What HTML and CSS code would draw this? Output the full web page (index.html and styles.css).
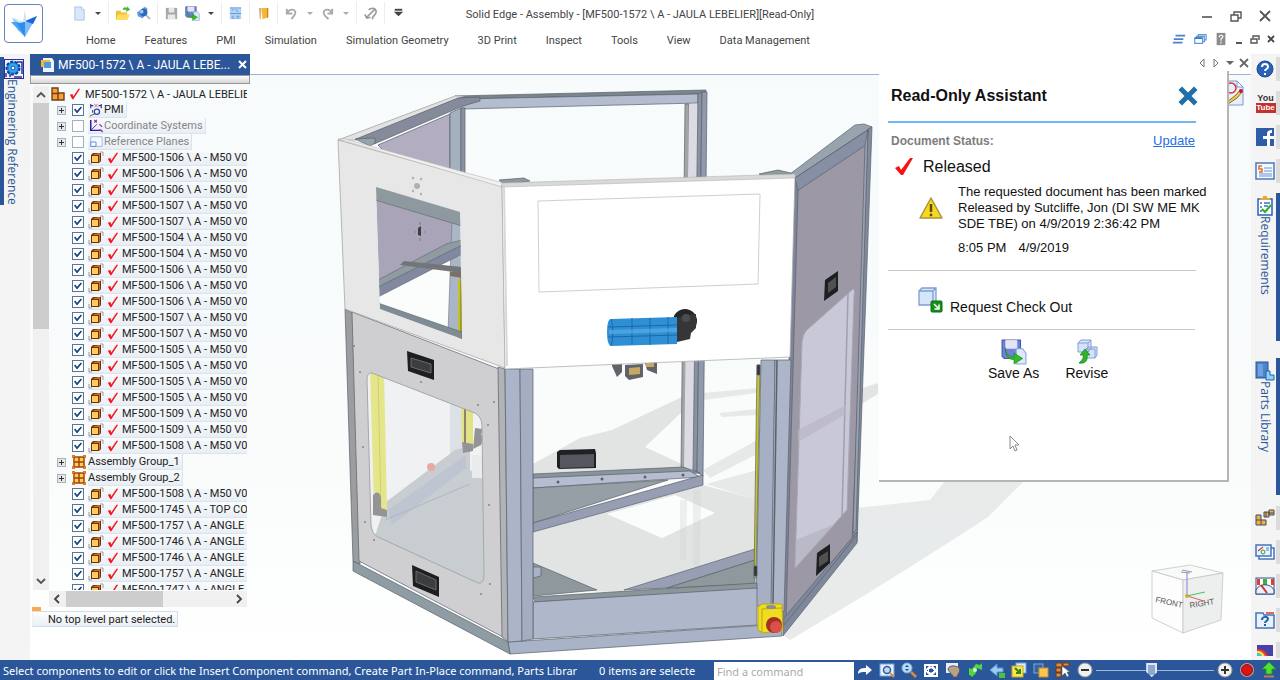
FILE: index.html
```html
<!DOCTYPE html>
<html lang="en">
<head>
<meta charset="utf-8">
<title>Solid Edge - Assembly</title>
<link rel="stylesheet" href="styles.css">
</head>
<body>
<svg class="defs" aria-hidden="true">
  <symbol id="part" viewBox="0 0 16 14"><path d="M1 13V9M1 13h3M15 1v4M15 1h-3" stroke="#9aa0a8" fill="none"/><path d="M3 4l2-2h8v8l-2 2H3z" fill="#6e3210"/><path d="M12 2v8l-1 1V4H5l1-1z" fill="#c8741f"/><rect x="4" y="5" width="6" height="6" fill="#ffcb5c"/></symbol>
  <symbol id="tick" viewBox="0 0 14 14"><path d="M1 8l3-1 1 3 6-9h2L5 13H4z" fill="#f81414"/></symbol>
  <symbol id="root" viewBox="0 0 14 14"><path d="M1 1h6v5h6v7H1z" fill="#f2a43c" stroke="#7a3a12" stroke-width="1.400"/><path d="M1 6.500h7M7 6v7" stroke="#7a3a12" stroke-width="1.400"/></symbol>
  <symbol id="group" viewBox="0 0 14 14"><rect x="2" y="2" width="10" height="10" fill="#ffcf52" stroke="#a3410a" stroke-width="1.500"/><path d="M7 2v10M2 7h10" stroke="#a3410a" stroke-width="1.500"/><path d="M0 0h3v1H1v2H0zM14 0v3h-1V1h-2V0zM0 14v-3h1v2h2v1zM14 14h-3v-1h2v-2h1z" fill="#e87817"/></symbol>
  <symbol id="pmi" viewBox="0 0 16 16"><path d="M2 1v5M14 1v5M2 3h3M11 3h3" stroke="#2b2f9a" stroke-width="1.300" fill="none"/><path d="M6 1l4 4M10 1L6 5" stroke="#e55"/><circle cx="9" cy="10" r="3" fill="none" stroke="#334bb5" stroke-width="1.500"/><path d="M1 15l6-3M4 8v3" stroke="#444"/></symbol>
  <symbol id="coord" viewBox="0 0 16 16"><path d="M2 1v12h13" fill="none" stroke="#2a1f9c" stroke-width="1.700"/><path d="M6 1l3 3M9 1L6 4M12 6l3 3M12 12l4 3" stroke="#9b2aa8" stroke-width="1.300"/><path d="M2 13l7-7" stroke="#2a1f9c"/></symbol>
  <symbol id="plane" viewBox="0 0 16 16"><path d="M2 2h13v11H2z" fill="#f5f9ff" stroke="#93b2e6"/><path d="M2 8h6v5H2z" fill="#fff" stroke="#4f7fd0"/></symbol>
  <symbol id="saveas" viewBox="0 0 24 24"><path d="M1 1h17v17H3l-2-2z" fill="#6f80d8" stroke="#4656ad"/><path d="M4 1h11v8H4z" fill="#e4e6f4"/><path d="M14 9h6l3 4v10h-9z" fill="#dbe9fb" stroke="#8aa6d4"/><path d="M4 8c0 6 3 8 8 9v-4l8 5-8 5v-4C7 19 4 16 4 8z" fill="#35bb24" stroke="#178a15" stroke-width=".6"/></symbol>
</svg>

<div class="app">
  <header class="top">
    <button class="logo" aria-label="Application menu"><svg width="30" height="30" viewBox="0 0 30 30"><path d="M3 9l8 4-1 10z" fill="#8fcdf8"/><path d="M2 13h14v15z" fill="#49a4f2"/><path d="M8 14l8-1v15z" fill="#2f8cea"/><path d="M16 13l12-6-12 21z" fill="#80bdf5"/><path d="M16 12l12-5-4 8z" fill="#1c64dd"/><path d="M3 8l12 5-5 1z" fill="#c9e8fc"/><path d="M16 1l1 11-3 1z" fill="#c9dcf2"/></svg></button>
    <div class="bars">
      <div class="titlebar">
        <div class="quick">
          <div class="grp"><button class="ic" aria-label="New"><svg viewBox="0 0 16 16"><path d="M3 1h7l3 3v11H3z" fill="#d7e8fb" stroke="#a9c4e8"/><path d="M10 1v3h3" fill="#fff" stroke="#a9c4e8"/></svg></button><button class="car" aria-label="New options"></button></div>
          <div class="grp"><button class="ic" aria-label="Open"><svg viewBox="0 0 16 16"><path d="M1 5h5l1 2h6v7H1z" fill="#f3c234"/><path d="M3 9h13l-3 6H1z" fill="#ffdd63"/><path d="M8 4c1-3 3-3 5-2V0l3 4-4 2V4z" fill="#4ab432"/></svg></button><button class="ic" aria-label="View part"><svg viewBox="0 0 16 16"><path d="M10 9l5 5" stroke="#b4b9bf" stroke-width="2"/><path d="M1 7l8-6 3 1v6l-5 5-5-2z" fill="#5f9be0"/><circle cx="8" cy="7" r="4" fill="#2e67b8"/><circle cx="6" cy="6" r="2" fill="#9cc8f4"/></svg></button></div>
          <div class="grp"><button class="ic" aria-label="Save"><svg viewBox="0 0 16 16"><path d="M2 2h12v12H2z" fill="#a7a7a7"/><path d="M5 2h6v5H5zM4 9h8v5H4z" fill="#e8e8e8"/></svg></button><button class="ic" aria-label="Save as"><svg viewBox="0 0 24 24"><use href="#saveas"/></svg></button><button class="car" aria-label="Save options"></button></div>
          <div class="grp"><button class="ic" aria-label="Grid"><svg viewBox="0 0 16 16"><rect x="2" y="2" width="12" height="12" fill="#b4d2f4"/><path d="M2 8h12M2 2h12M4 4h2M8 4l3 2M4 11h2M9 11h3M4 13h3M9 13h3" stroke="#5f97d6"/></svg></button></div>
          <div class="grp"><button class="ic" aria-label="Library"><svg viewBox="0 0 16 16"><path d="M3 2h3l-1 12H4z" fill="#d9b08f"/><path d="M6 2h7v10l-6 2z" fill="#f4b82f"/><path d="M12 2h1v10l-1 1z" fill="#b7761b"/></svg></button></div>
          <div class="grp"><button class="ic" aria-label="Undo"><svg viewBox="0 0 16 16"><path d="M3 3v5h6M3 8c3-6 10-5 9 0-1 3-3 4-4 6" fill="none" stroke="#a9a9a9" stroke-width="2"/></svg></button><button class="car dim" aria-label="Undo list"></button><button class="ic" aria-label="Redo"><svg viewBox="0 0 16 16"><path d="M13 3v5H8M13 8C10 2 3 3 4 8c1 3 3 4 5 6" fill="none" stroke="#a9a9a9" stroke-width="2"/></svg></button><button class="car dim" aria-label="Redo list"></button></div>
          <div class="grp"><button class="ic" aria-label="Selection"><svg viewBox="0 0 16 16"><path d="M2 9l2 4 4-1M4 12L13 3M6 4c4-3 8-1 8 2 0 4-4 4-4 8" fill="none" stroke="#999" stroke-width="1.700"/></svg></button></div>
          <button class="ic" aria-label="Customize"><svg viewBox="0 0 16 16"><path d="M4 3h8v2H4z" fill="#444"/><path d="M3 6h10l-5 5z" fill="#444"/></svg></button>
        </div>
        <h1>Solid Edge - Assembly - [MF500-1572 \ A - JAULA LEBELIER][Read-Only]</h1>
        <div class="winctl">
          <button aria-label="Minimize"><svg viewBox="0 0 14 14"><path d="M2 8h10" stroke="#555" stroke-width="1.600"/></svg></button>
          <button aria-label="Restore"><svg viewBox="0 0 14 14"><path d="M2 6h7v6H2zM5 6V3h7v6H9" fill="none" stroke="#555" stroke-width="1.400"/></svg></button>
          <button aria-label="Close"><svg viewBox="0 0 14 14"><path d="M2 2l10 10M12 2L2 12" stroke="#555" stroke-width="1.800"/></svg></button>
        </div>
      </div>
      <div class="ribbon">
        <nav><a href="#">Home</a><a href="#">Features</a><a href="#">PMI</a><a href="#">Simulation</a><a href="#">Simulation Geometry</a><a href="#">3D Print</a><a href="#">Inspect</a><a href="#">Tools</a><a href="#">View</a><a href="#">Data Management</a></nav>
        <div class="ribctl">
          <button class="wide" aria-label="Ribbon"><svg viewBox="0 0 16 16"><path d="M4 4h11M2 8h11M1 12h11" stroke="#4b83cc" stroke-width="2"/></svg></button>
          <button class="wide" aria-label="Windows"><svg viewBox="0 0 16 16"><path d="M2 7h9v6H2zM4 7V5h9v6h-2M6 5V3h9v6h-2" fill="#fff" stroke="#5c94d8" stroke-width="1.300"/><path d="M2 7h9" stroke="#3b78c8" stroke-width="2"/></svg></button>
          <button class="wide" aria-label="Help"><svg viewBox="0 0 16 16"><path d="M3 1h10v14H3z" fill="#8c8c8c"/><path d="M6 6c0-3 5-3 4 0l-2 2v2M8 11v2" fill="none" stroke="#fff" stroke-width="1.300"/></svg></button>
          <button aria-label="Minimize document"><svg viewBox="0 0 14 14"><path d="M4 11h6" stroke="#444" stroke-width="1.800"/></svg></button>
          <button aria-label="Restore document"><svg viewBox="0 0 14 14"><path d="M3 7h6v4H3zM5 6V4h6v4" fill="none" stroke="#555" stroke-width="1.400"/></svg></button>
          <button aria-label="Close document"><svg viewBox="0 0 14 14"><path d="M4 4l6 6M10 4l-6 6" stroke="#444" stroke-width="1.800"/></svg></button>
        </div>
      </div>
    </div>
  </header>

  <main class="work">
    <aside class="rail left">
      <button class="tab tall eng"><svg width="20" height="20" viewBox="0 0 20 20"><rect x=".5" y=".5" width="19" height="19" fill="#eef4ff" stroke="#2b2f9a"/><path d="M13 3h5v12M2 18V14M6 18v-3M10 18h8" fill="none" stroke="#2b2f9a" stroke-width="1.500"/><circle cx="9" cy="9" r="6.500" fill="#1e8fe0" stroke="#123c9c" stroke-width="2" stroke-dasharray="3 1.500"/><circle cx="9" cy="9" r="4" fill="#35b0f5"/><circle cx="9" cy="9" r="2" fill="#fff" stroke="#123c9c"/></svg><span>Engineering Reference</span></button>
    </aside>

    <section class="finder" aria-label="PathFinder">
      <div class="ftitle"><svg width="14" height="14" viewBox="0 0 14 14"><path d="M2 0h9l2 3v11H2z" fill="#eef4fb"/><path d="M0 2h9v7H0z" fill="#f0b93a"/><path d="M3 4h7v6H3z" fill="#4d9be0"/></svg><h2>MF500-1572 \ A - JAULA LEBE...</h2><button aria-label="Close"><svg width="9" height="9" viewBox="0 0 9 9"><path d="M1 1l7 7M8 1L1 8" stroke="#fff" stroke-width="2"/></svg></button></div>
      <div class="grip"></div>
      <div class="treebox">
        <div class="vscroll"><svg width="10" height="8" viewBox="0 0 10 8"><path d="M1 6l4-4 4 4" fill="none" stroke="#555" stroke-width="1.800"/></svg><div class="track"><div class="thumb"></div></div><svg width="10" height="8" viewBox="0 0 10 8"><path d="M1 2l4 4 4-4" fill="none" stroke="#555" stroke-width="1.800"/></svg></div>
        <ul class="tree">
          <li class="root"><svg class="g"><use href="#root"/></svg><svg class="t"><use href="#tick"/></svg><span>MF500-1572 \ A - JAULA LEBELIER</span></li>
          <li class="sys"><button class="plus" aria-label="Expand"></button><label><input type="checkbox" checked><span class="hl"><svg class="p"><use href="#pmi"/></svg><span>PMI</span></span></label></li>
          <li class="sys off"><button class="plus" aria-label="Expand"></button><label><input type="checkbox"><span class="hl"><svg class="p"><use href="#coord"/></svg><span>Coordinate Systems</span></span></label></li>
          <li class="sys off"><button class="plus" aria-label="Expand"></button><label><input type="checkbox"><span class="hl"><svg class="p"><use href="#plane"/></svg><span>Reference Planes</span></span></label></li>
          <li><label><input type="checkbox" checked><span class="hl"><svg class="p"><use href="#part"/></svg><svg class="t"><use href="#tick"/></svg><span>MF500-1506 \ A - M50 V0</span></span></label></li>
          <li><label><input type="checkbox" checked><span class="hl"><svg class="p"><use href="#part"/></svg><svg class="t"><use href="#tick"/></svg><span>MF500-1506 \ A - M50 V0</span></span></label></li>
          <li><label><input type="checkbox" checked><span class="hl"><svg class="p"><use href="#part"/></svg><svg class="t"><use href="#tick"/></svg><span>MF500-1506 \ A - M50 V0</span></span></label></li>
          <li><label><input type="checkbox" checked><span class="hl"><svg class="p"><use href="#part"/></svg><svg class="t"><use href="#tick"/></svg><span>MF500-1507 \ A - M50 V0</span></span></label></li>
          <li><label><input type="checkbox" checked><span class="hl"><svg class="p"><use href="#part"/></svg><svg class="t"><use href="#tick"/></svg><span>MF500-1507 \ A - M50 V0</span></span></label></li>
          <li><label><input type="checkbox" checked><span class="hl"><svg class="p"><use href="#part"/></svg><svg class="t"><use href="#tick"/></svg><span>MF500-1504 \ A - M50 V0</span></span></label></li>
          <li><label><input type="checkbox" checked><span class="hl"><svg class="p"><use href="#part"/></svg><svg class="t"><use href="#tick"/></svg><span>MF500-1504 \ A - M50 V0</span></span></label></li>
          <li><label><input type="checkbox" checked><span class="hl"><svg class="p"><use href="#part"/></svg><svg class="t"><use href="#tick"/></svg><span>MF500-1506 \ A - M50 V0</span></span></label></li>
          <li><label><input type="checkbox" checked><span class="hl"><svg class="p"><use href="#part"/></svg><svg class="t"><use href="#tick"/></svg><span>MF500-1506 \ A - M50 V0</span></span></label></li>
          <li><label><input type="checkbox" checked><span class="hl"><svg class="p"><use href="#part"/></svg><svg class="t"><use href="#tick"/></svg><span>MF500-1506 \ A - M50 V0</span></span></label></li>
          <li><label><input type="checkbox" checked><span class="hl"><svg class="p"><use href="#part"/></svg><svg class="t"><use href="#tick"/></svg><span>MF500-1507 \ A - M50 V0</span></span></label></li>
          <li><label><input type="checkbox" checked><span class="hl"><svg class="p"><use href="#part"/></svg><svg class="t"><use href="#tick"/></svg><span>MF500-1507 \ A - M50 V0</span></span></label></li>
          <li><label><input type="checkbox" checked><span class="hl"><svg class="p"><use href="#part"/></svg><svg class="t"><use href="#tick"/></svg><span>MF500-1505 \ A - M50 V0</span></span></label></li>
          <li><label><input type="checkbox" checked><span class="hl"><svg class="p"><use href="#part"/></svg><svg class="t"><use href="#tick"/></svg><span>MF500-1505 \ A - M50 V0</span></span></label></li>
          <li><label><input type="checkbox" checked><span class="hl"><svg class="p"><use href="#part"/></svg><svg class="t"><use href="#tick"/></svg><span>MF500-1505 \ A - M50 V0</span></span></label></li>
          <li><label><input type="checkbox" checked><span class="hl"><svg class="p"><use href="#part"/></svg><svg class="t"><use href="#tick"/></svg><span>MF500-1505 \ A - M50 V0</span></span></label></li>
          <li><label><input type="checkbox" checked><span class="hl"><svg class="p"><use href="#part"/></svg><svg class="t"><use href="#tick"/></svg><span>MF500-1509 \ A - M50 V0</span></span></label></li>
          <li><label><input type="checkbox" checked><span class="hl"><svg class="p"><use href="#part"/></svg><svg class="t"><use href="#tick"/></svg><span>MF500-1509 \ A - M50 V0</span></span></label></li>
          <li><label><input type="checkbox" checked><span class="hl"><svg class="p"><use href="#part"/></svg><svg class="t"><use href="#tick"/></svg><span>MF500-1508 \ A - M50 V0</span></span></label></li>
          <li class="sys"><button class="plus" aria-label="Expand"></button><svg class="g"><use href="#group"/></svg><span class="hl fit">Assembly Group_1</span></li>
          <li class="sys"><button class="plus" aria-label="Expand"></button><svg class="g"><use href="#group"/></svg><span class="hl fit">Assembly Group_2</span></li>
          <li><label><input type="checkbox" checked><span class="hl"><svg class="p"><use href="#part"/></svg><svg class="t"><use href="#tick"/></svg><span>MF500-1508 \ A - M50 V0</span></span></label></li>
          <li><label><input type="checkbox" checked><span class="hl"><svg class="p"><use href="#part"/></svg><svg class="t"><use href="#tick"/></svg><span>MF500-1745 \ A - TOP COV</span></span></label></li>
          <li><label><input type="checkbox" checked><span class="hl"><svg class="p"><use href="#part"/></svg><svg class="t"><use href="#tick"/></svg><span>MF500-1757 \ A - ANGLE C</span></span></label></li>
          <li><label><input type="checkbox" checked><span class="hl"><svg class="p"><use href="#part"/></svg><svg class="t"><use href="#tick"/></svg><span>MF500-1746 \ A - ANGLE C</span></span></label></li>
          <li><label><input type="checkbox" checked><span class="hl"><svg class="p"><use href="#part"/></svg><svg class="t"><use href="#tick"/></svg><span>MF500-1746 \ A - ANGLE C</span></span></label></li>
          <li><label><input type="checkbox" checked><span class="hl"><svg class="p"><use href="#part"/></svg><svg class="t"><use href="#tick"/></svg><span>MF500-1757 \ A - ANGLE C</span></span></label></li>
          <li><label><input type="checkbox" checked><span class="hl"><svg class="p"><use href="#part"/></svg><svg class="t"><use href="#tick"/></svg><span>MF500-1747 \ A - ANGLE C</span></span></label></li>
        </ul>
      </div>
      <div class="hscroll"><svg width="8" height="10" viewBox="0 0 8 10"><path d="M6 1L2 5l4 4" fill="none" stroke="#444" stroke-width="1.800"/></svg><div class="htrack"><div class="hthumb"></div></div><svg width="8" height="10" viewBox="0 0 8 10"><path d="M2 1l4 4-4 4" fill="none" stroke="#444" stroke-width="1.800"/></svg></div>
      <div class="mark"></div>
      <div class="msg">No top level part selected.</div>
    </section>

    <section class="view">
      <div class="strip">
        <button aria-label="Previous"><svg viewBox="0 0 12 12"><path d="M8 2v8L4 6z" fill="none" stroke="#777"/></svg></button><button aria-label="Next"><svg viewBox="0 0 12 12"><path d="M4 2v8l4-4z" fill="none" stroke="#777"/></svg></button><button aria-label="List"><svg viewBox="0 0 12 12"><path d="M2 4h8L6 8z" fill="#666"/></svg></button><button aria-label="Close view"><svg viewBox="0 0 12 12"><path d="M2 2l8 8M10 2l-8 8" stroke="#666" stroke-width="1.800"/></svg></button>
      </div>
      <div class="canvas">
<svg class="scene" viewBox="250 75 1001 585" preserveAspectRatio="xMinYMin meet" role="img" aria-label="Machine enclosure assembly">
  <!-- floor shadows -->
  <g fill="#e2e4e4">
    <path d="M533 464L580 438 612 430 684 396V410L645 447 684 465V473L533 480z"/>
    <path d="M703 393L757 388V393L703 400zM719 413L757 409V415L722 417zM703 470L757 440V454L710 478zM706 484L757 500V470z" opacity=".8"/>
    <path d="M862 388L878 383V394L858 406z"/>
    <path d="M857 508L930 500 945 481H1024L988 517 940 548 870 592 790 640 784 636 857 543z" opacity=".75"/>
    <path d="M533 532L703 485 755 499V550L620 592 533 590z"/>
  </g>
  <path d="M607 514L675 495 715 513 662 538z" fill="#fbfdfc"/>
  <path d="M680 500h7l-1 60h-6zM693 490h8l-1 76h-7z" fill="#cfd3d6" opacity=".35"/>
  <g stroke="#59616b" stroke-width=".7" stroke-linejoin="round">
    <!-- rear frame -->
    <path d="M455 96L706 90 706 94 462 99z" fill="#7b868c"/>
    <path d="M462 99L698 94V103L462 109z" fill="#b4bccf"/>
    <path d="M685 104H689L686 468H681z" fill="#a3a5a5"/>
    <path d="M689 104H698L693 470H684z" fill="#dcdae4" stroke="none"/>
    <path d="M698 94L702 92 697 472 693 470z" fill="#8993a0"/>
    <path d="M702 92H707L703 476 697 472z" fill="#9199af"/>
    <path d="M378 145L450 114V170L385 152z" fill="#b3adc1"/>
    <path d="M450 113L461 108V174L450 170z" fill="#a4b0bd"/>
    <path d="M461 108H465V174H461z" fill="#8b91a3"/>
    <path d="M338 140L455 96 464 96 356 140z" fill="#e2e2e2" stroke="#999"/>
    <path d="M356 139L458 98 480 97 480 101 463 106 374 144z" fill="#858b9a"/>
    <path d="M355 139L375 138V143L370 146z" fill="#96a4aa"/>
    <path d="M499 180L524 178 530 181 505 185zM759 174L778 170 795 174 770 178z" fill="#8f9a9f"/>
    <!-- rear floor beams -->
    <path d="M533 474L683 467 700 473 533 481z" fill="#89949a"/>
    <path d="M533 478L690 471 700 477 533 488z" fill="#b6bdd0"/>
    <path d="M533 488L668 480 533 523z" fill="#969fa5"/>
    <path d="M533 523L703 475V485L533 532z" fill="#979eb4"/>
    <path d="M624 590L755 549V560L667 588z" fill="#999fb3"/>
    <path d="M667 588L755 560V584z" fill="#8f999d"/>
    <path d="M533 563L597 590 533 596z" fill="#8f999d"/>
    <path d="M533 567L541 567 541 576 533 578z" fill="#aab2c4"/>
  </g>
  <g fill="#59616b"><circle cx="558" cy="482" r="1.500"/><circle cx="602" cy="479" r="1.500"/><circle cx="645" cy="477" r="1.500"/><circle cx="683" cy="475" r="1.500"/></g>
  <!-- rear latch box -->
  <path d="M557 452L560 450 595 449 596 453V468L559 469 557 467z" fill="#1f2022"/><path d="M560 455L594 454V467L560 468z" fill="#55565f"/>
  <!-- hanging brackets -->
  <path d="M612 362L622 363V372L617 377 612 366zM625 365L643 364V377L629 380 625 376zM645 363L657 362V374L647 370z" fill="#626368"/><path d="M629 368L640 367V374L629 375zM646 363h8v4h-8z" fill="#c7a765"/>
  <g stroke="#59616b" stroke-width=".7" stroke-linejoin="round">
    <!-- right wall -->
    <path d="M795 178L867 129 857 534 783 630z" fill="#9c98a5"/>
    <path d="M790 174L855 125 864 124 872 127 795 178z" fill="#98a4ad"/>
    <path d="M795 178L868 130 866 145 797 191z" fill="#878fa4"/>
    <path d="M868 129L872 127 857 542 852 545 864 240z" fill="#838a9b"/>
    <path d="M865 145L868 130 856 530 853 533z" fill="#98a2b3"/>
    <path d="M795 178L798 191 786 620 782 628 789 360z" fill="#7f8499"/>
    <path d="M857 532V543L783 636 784 618z" fill="#7f889a"/>
    <path d="M857 535L784 625" fill="none"/>
  </g>
  <path d="M808 329L853 289Q855 289 854 296L847 510 795 568 802 342Q803 333 808 329z" fill="#c8c8d6" stroke="#a9a7b5"/>
  <path d="M848 293L842 516" stroke="#a09fb0" stroke-width="1.500"/><path d="M798 430L846 405V414L798 442z" fill="#b9b7c5" opacity=".7"/>
  <path d="M796 540L835 524 795 568z" fill="#b3b2c0" opacity=".7"/>
  <path d="M825 280L838 271V291L824 301zM817 553L830 544V563L816 576z" fill="#1e1f20"/><path d="M828 283L836 277V287L828 293zM819 557L828 551V561L819 567z" fill="#4f5152"/>
  <g stroke="#59616b" stroke-width=".7" stroke-linejoin="round">
    <!-- front right posts -->
    <path d="M761 360H775L772 606H756z" fill="#a6afc3"/><path d="M775 360H791L784 612 771 606z" fill="#adb5c8"/><path d="M777 360L773 604" fill="none" stroke-width="1.500"/>
    <path d="M757 365H760L756 578H754z" fill="#c8c81c"/><path d="M757 365h3v10h-3zM754 566h3v10h-3z" fill="#333"/>
    <!-- front sill -->
    <path d="M533 597L757 583V589L535 602z" fill="#8b969b"/>
    <path d="M533 602L757 588V625L533 639z" fill="#afb7ca"/>
    <path d="M508 642L782 624V636L510 654z" fill="#a9b3c7"/>
    <path d="M353 561L508 642 510 654 353 571z" fill="#8f9ca4"/>
    <!-- lower left door -->
    <path d="M345 309L353 313 360 564 353 561z" fill="#9b9da0"/>
    <path d="M352 312L499 369 503 637 359 561z" fill="#cfcfd1"/>
    <path d="M498 367L505 369 508 642 502 637z" fill="#b2b3b5"/>
    <path d="M505 369H520L522 641 508 642z" fill="#abb4c8"/><path d="M520 369H533V639L522 641z" fill="#a4adc2"/>
  </g>
  <clipPath id="pane"><path d="M372 373L475 413Q482 417 482 426L484 575Q484 584 478 583L378 537Q372 534 371 525L367 380Q367 372 372 373z"/></clipPath>
  <g clip-path="url(#pane)">
    <path d="M365 370h121v216H365z" fill="#eff1f2"/>
    <path d="M450 400h14v80h-14z" fill="#dce1e7"/>
    <path d="M386 502L455 450 470 446 470 470 484 480V590L375 536z" fill="#c8cdd2"/>
    <path d="M388 510L466 455V468L392 525z" fill="#bfc4d1"/><path d="M385 520L470 484" stroke="#afb6bf"/>
    <path d="M472 455h14v23h-14z" fill="#e9ebec"/>
    <circle cx="431" cy="467" r="4" fill="#e8a9a2"/>
    <path d="M370 370H384L387 512 374 508z" fill="#e5e68c"/><path d="M378 373L381 510" stroke="#cfcf6d"/>
    <path d="M461 405h12v40h-11z" fill="#e1e283"/><path d="M465 405v40" stroke="#8d8170" stroke-width="2"/>
    <path d="M373 495q6-6 8 3v10l6 2v7l-14-2z" fill="#949396"/><path d="M462 442l11 2v7l-10 2zM475 428l8 1-2 6 3 2-3 8-8 4 1-10z" fill="#949396"/>
  </g>
  <path d="M372 373L475 413Q482 417 482 426L484 575Q484 584 478 583L378 537Q372 534 371 525L367 380Q367 372 372 373z" fill="none" stroke="#a6a6a8"/>
  <g fill="#85868a"><circle cx="360" cy="372" r="1"/><circle cx="354" cy="346" r="1"/><circle cx="363" cy="447" r="1"/><circle cx="365" cy="522" r="1"/><circle cx="374" cy="540" r="1"/><circle cx="478" cy="405" r="1"/><circle cx="494" cy="402" r="1"/><circle cx="488" cy="425" r="1"/><circle cx="489" cy="505" r="1"/><circle cx="490" cy="584" r="1"/><circle cx="481" cy="594" r="1"/><circle cx="421" cy="382" r="1"/></g>
  <g fill="#1d1e1f"><path d="M407 351L434 360V380L408 371zM412 565L439 577V597L413 586z"/></g>
  <path d="M411 358L431 364V373L411 367zM416 571L436 580V590L416 582z" fill="#3c3d3f" stroke="#686a6c"/>
  <!-- upper panels -->
  <path d="M338 140L502 186 505 368 345 309z" fill="#e7e7e8" stroke="#a7a7a7" stroke-width=".8"/>
  <path d="M338 139L345 139 503 183 502 187z" fill="#f1f0ef" stroke="#b5b5b5" stroke-width=".6"/>
  <path d="M502 185L795 177 790 357 505 369z" fill="#fff" stroke="#b0b0b0" stroke-width=".8"/>
  <path d="M502 183L795 174V178L502 187z" fill="#d9d9d8" stroke="#aaa" stroke-width=".5"/>
  <path d="M504 187L507 366" stroke="#d8d8d8" stroke-width="2"/>
  <path d="M538 201L760 194 758 284 539 292z" fill="none" stroke="#cfcfcf"/>
  <g fill="#aeb0b5"><circle cx="417" cy="186" r="3"/><circle cx="413" cy="178" r="1.200"/><circle cx="421" cy="179" r="1.200"/><circle cx="413" cy="191" r="1.200"/><circle cx="421" cy="194" r="1.200"/></g>
  <clipPath id="port"><path d="M376 187L460 212 462 339 380 309z"/></clipPath>
  <g clip-path="url(#port)">
    <path d="M370 180h100v170H370z" fill="#fafdfc"/>
    <path d="M376 199L452 222V245L379 285z" fill="#aaa4b8"/>
    <path d="M452 222h10v110H448z" fill="#aab6c6" stroke="#6c7684" stroke-width=".6"/>
    <path d="M375 186L462 212V226L375 200z" fill="#8e999f" stroke="#5c6670" stroke-width=".6"/>
    <path d="M378 280L446 244 462 240V246L378 288z" fill="#8f9ba0" stroke="#5c6670" stroke-width=".6"/>
    <path d="M378 287L462 245V254L378 297z" fill="#8188a0" stroke="#5c6670" stroke-width=".6"/>
    <path d="M400 265L404 261 462 267V273z" fill="#747579"/><path d="M450 272h12v6l-12-2z" fill="#7a7164"/>
    <path d="M458 280h4v60h-4z" fill="#c3c222"/><path d="M461 275v62" stroke="#70723c"/>
    <path d="M378 303L462 332V341L378 310z" fill="#808c94" stroke="#5c6670" stroke-width=".6"/>
    <path d="M418 228l3-2v10l-3-1z" fill="#3d3d42"/><path d="M420 222v3M420 238v3M415 232h1M424 232h1" stroke="#777"/>
  </g>
  <!-- motor -->
  <circle cx="685" cy="321" r="12" fill="#252628"/><path d="M686 315l10-1v14l-5 5-1 6-13 3v-24z" fill="#353638"/><circle cx="686" cy="318" r="4" fill="#4b4c50"/>
  <path d="M611 319L677 317V344L611 346Q607 345 607 332T611 319z" fill="#2f8fd5"/><path d="M611 319Q615 332 611 346M632 318v27M650 318v27M668 317v27M608 327L677 325M608 337L677 335" fill="none" stroke="#1b68a8"/><path d="M609 330L677 328V332L609 334z" fill="#62b1ea" opacity=".6"/>
  <!-- emergency stop -->
  <path d="M758 607L762 604 782 604 783 630 763 633 758 630z" fill="#f0dc20" stroke="#bba810"/><path d="M762 609L782 608M762 609V632" stroke="#bba810"/><ellipse cx="771" cy="607" rx="5" ry="2" fill="#8b8d92"/><circle cx="774" cy="625" r="8" fill="#a52e27"/><circle cx="776" cy="627" r="6" fill="#d95049"/>
  <!-- view cube -->
  <g stroke="#c4c7c7" stroke-width=".8"><path d="M1152 571L1190 565 1223 573 1183 580z" fill="#f8f9f9"/><path d="M1152 571L1183 580V633L1152 618z" fill="#fdfdfd"/><path d="M1183 580L1223 573 1221 620 1183 633z" fill="#edeeee"/></g>
  <g class="cubetext"><text x="1155" y="602" transform="rotate(12 1155 602)">FRONT</text><text x="1190" y="608" transform="rotate(-9 1190 608)">RIGHT</text><path d="M1182 570l10 2M1181 572l9 1" stroke="#999"/></g>
  <path d="M1187 596V573" stroke="#8080e0"/><path d="M1187 596L1205 592" stroke="#40c860"/><path d="M1187 596L1204 601" stroke="#e06060"/><circle cx="1187" cy="596" r="2" fill="#c9b02a"/>
</svg>
      </div>
      <button class="sketch" aria-label="Markup"><svg width="20" height="26" viewBox="0 0 20 26"><path d="M1 1h12l6 6v18H1z" fill="#e7effb" stroke="#7f98cc"/><path d="M13 1v6h6z" fill="#fff" stroke="#7f98cc"/><circle cx="7" cy="8" r="5" fill="none" stroke="#d8333a" stroke-width="1.500"/><path d="M3 22l9-7 4-5 2 2-5 6-9 6z" fill="#f2cf52" stroke="#8d6a24"/><circle cx="17" cy="11" r="2" fill="#c4123f"/></svg></button>

      <aside class="assist" aria-label="Read-Only Assistant">
        <div class="ahead"><h2>Read-Only Assistant</h2><button aria-label="Close assistant"><svg width="20" height="20" viewBox="0 0 20 20"><path d="M4 4l12 12M16 4L4 16" stroke="#1f6fa8" stroke-width="5" stroke-linecap="square"/></svg></button></div>
        <div class="arow"><h3>Document Status:</h3><a href="#">Update</a></div>
        <div class="rel"><svg width="18" height="18" viewBox="0 0 18 18"><path d="M0 10l4-2 2 4 9-12h3L8 17H6z" fill="#fa1010"/></svg><strong>Released</strong></div>
        <div class="note"><svg width="26" height="22" viewBox="0 0 26 22"><path d="M13 1l11 20H2z" fill="#f8d81c" stroke="#a89440" stroke-width="1.500" stroke-linejoin="round"/><path d="M13 7v8" stroke="#574d12" stroke-width="2.500"/><circle cx="13" cy="18" r="1.400" fill="#574d12"/></svg>
          <div><p>The requested document has been marked<br>Released by Sutcliffe, Jon (DI SW ME MK<br>SDE TBE) on 4/9/2019 2:36:42 PM</p><p class="time"><span>8:05 PM</span><span>4/9/2019</span></p></div></div>
        <button class="checkout"><svg width="26" height="26" viewBox="0 0 26 26"><path d="M1 4h14v14H1zM1 4l3-3h14v13l-3 4M15 4l3-3" fill="#d5e5fa" stroke="#7f9ed0" stroke-width="1.300"/><rect x="13" y="14" width="11" height="11" rx="1" fill="#129018" stroke="#0a6d10"/><path d="M16 17l5 5M21 17.500V22h-4.500" fill="none" stroke="#fff" stroke-width="1.500"/></svg><span>Request Check Out</span></button>
        <div class="acts">
          <button><svg width="26" height="26" viewBox="0 0 24 24"><use href="#saveas"/></svg>Save As</button>
          <button><svg width="26" height="26" viewBox="0 0 26 26"><path d="M4 4h10v9H4zM4 4l3-3h10v9l-3 3M14 4l3-3M12 10h9v9h-9zM12 10l2-2h9v8l-2 3" fill="#d3e3f9" stroke="#829fd0"/><path d="M5 24c6 1 9-2 8-8h3l-5-6-5 6h3c1 3-1 5-4 8z" fill="#30b428" stroke="#12801a" stroke-width=".7"/></svg>Revise</button>
        </div>
        <svg class="cursor" width="12" height="18" viewBox="0 0 12 18"><path d="M1 1v13l3-3 2 5 2-1-2-5h4z" fill="#fff" stroke="#888"/></svg>
      </aside>
    </section>

    <aside class="rail right">
      <button class="tab" aria-label="Help"><svg viewBox="0 0 20 20"><circle cx="10" cy="10" r="8" fill="#2b62b8" stroke="#1e4890"/><path d="M7 8c0-4 6-4 6 0 0 2-3 2-3 4M10 14v2" fill="none" stroke="#fff" stroke-width="2"/></svg></button>
      <button class="tab yt" aria-label="YouTube"><b>You</b><i>Tube</i></button>
      <button class="tab" aria-label="Facebook"><svg viewBox="0 0 20 20"><rect x="1" y="1" width="18" height="18" fill="#2d5ca8"/><path d="M12 19v-7H8V9h4V7c0-3 2-4 5-4v3c-2 0-2 0-2 2v1h4v3h-4v7z" fill="#fff"/></svg></button>
      <button class="tab" aria-label="News"><svg viewBox="0 0 20 20"><rect x="1" y="2" width="18" height="16" fill="#f3f8ff" stroke="#4b7abf" stroke-width="1.500"/><path d="M9 7h8M9 10h8M4 13h13M4 15h13" stroke="#6a95d3"/><path d="M7 5H4v3h3v3H4" fill="none" stroke="#e07020" stroke-width="1.500"/></svg></button>
      <button class="tab tall req"><svg viewBox="0 0 20 20"><path d="M3 3h14v16H3z" fill="#fff" stroke="#2b62b8" stroke-width="1.500"/><path d="M5 4V2h3V0h4v2h3v2z" fill="#e9a53b"/><path d="M5 7h2M5 11h2M5 15h2M9 7h6M9 10h4" stroke="#3d74c4" stroke-width="1.500"/><path d="M7 13l3 3 6-7" fill="none" stroke="#25b02b" stroke-width="2"/></svg><span>Requirements</span></button>
      <button class="tab tall lib"><svg viewBox="0 0 20 20"><rect x="1" y="1" width="12" height="16" fill="#4c84cc" stroke="#27549a"/><path d="M3 3h5v12H3z" fill="#6da1e0"/><path d="M11 10h4v4h4v5h-8z" fill="#8fd0f5" stroke="#1e62a8"/></svg><span>Parts Library</span></button>
      <button class="tab" aria-label="Components"><svg viewBox="0 0 20 20"><path d="M1 7h5v5h5v5H1zM9 4h5v5H9zM14 2h5v5h-5z" fill="#f4ae35" stroke="#3c4e70"/><path d="M1 12h5v5M11 4v5M14 5h5" fill="none" stroke="#3c4e70"/></svg></button>
      <button class="tab" aria-label="Gallery"><svg viewBox="0 0 20 20"><rect x="4" y="6" width="15" height="11" fill="#fff" stroke="#4274bb" stroke-width="1.500"/><rect x="1" y="3" width="15" height="11" fill="#eaf3ff" stroke="#4274bb" stroke-width="1.500"/><path d="M3 9l5-4" stroke="#e04040" stroke-width="1.500"/><circle cx="8" cy="10" r="2" fill="none" stroke="#2b9b3c"/><rect x="11" y="5" width="3" height="4" fill="#8fc2f0"/></svg></button>
      <button class="tab" aria-label="Sensors"><svg viewBox="0 0 20 20"><rect x="1" y="2" width="18" height="16" fill="#fff" stroke="#2c4e86"/><path d="M2 3h3v6H2zM16 3h3v6h-3z" fill="#df3c32"/><path d="M8 3h4v6H8z" fill="#35af46"/><path d="M1 14c3-7 15-7 18 0v4H1z" fill="#e9f0f8" stroke="#2c4e86"/><path d="M12 17L6 9" stroke="#d12e2e" stroke-width="2"/></svg></button>
      <button class="tab" aria-label="Learn"><svg viewBox="0 0 20 20"><path d="M1 3h7l1 2h10v13H1z" fill="#e8f2ff" stroke="#4274bb" stroke-width="1.500"/><path d="M11 3h8" stroke="#d33" stroke-width="1.500"/><path d="M7 10c0-4 6-4 6-1 0 2-3 2-3 4M10 14v2" fill="none" stroke="#1f5fa8" stroke-width="2"/></svg></button>
      <button class="tab last" aria-label="Simulation colors"><svg viewBox="0 0 20 12"><rect x="2" y="1" width="16" height="11" fill="#4b3fa8"/><path d="M2 5c8 0 9 4 11 7H2z" fill="#e63b2e"/><path d="M2 7c5 0 6 2 8 5H2z" fill="#ffe13b"/><path d="M2 9c3 0 4 1 5 3H2z" fill="#3cc0e0"/></svg></button>
    </aside>
  </main>

  <footer class="status">
    <span class="hint">Select components to edit or click the Insert Component command, Create Part In-Place command, Parts Librar</span>
    <span class="count">0 items are selecte</span>
    <input class="find" type="text" placeholder="Find a command" aria-label="Find a command">
    <div class="stools">
      <button aria-label="Go"><svg viewBox="0 0 16 16"><path d="M1 12c0-5 3-6 8-6V3l6 5-6 5v-3C5 10 3 10 1 12z" fill="#fff"/></svg></button>
      <button aria-label="Zoom area"><svg viewBox="0 0 16 16"><rect x="1" y="2" width="14" height="12" fill="#e7f1fc" stroke="#6ba4de"/><circle cx="8" cy="8" r="3.500" fill="#bcdaf7" stroke="#335d94" stroke-width="1.500"/><path d="M11 11l4 4" stroke="#e08b33" stroke-width="2"/></svg></button>
      <button aria-label="Zoom"><svg viewBox="0 0 16 16"><circle cx="6" cy="6" r="5" fill="#b9dbf7" stroke="#7faedb"/><path d="M6 3l2 2H4zM6 9L4 7h4z" fill="#1c4a8a"/><path d="M10 10l5 5" stroke="#e08b33" stroke-width="2.500"/></svg></button>
      <button aria-label="Fit"><svg viewBox="0 0 16 16"><rect x="1" y="2" width="14" height="13" fill="#fff"/><path d="M3 4h3L3 7zM13 4v3l-3-3zM3 13v-3l3 3zM13 13h-3l3-3zM6 7h4v3H6z" fill="#24549e"/><path d="M8 4v8M4 8.500h8" stroke="#24549e" stroke-dasharray="1 1"/></svg></button>
      <button aria-label="Pan"><svg viewBox="0 0 16 16"><rect x="1" y="1" width="12" height="10" fill="#e7f1fc"/><path d="M3 7c1-4 8-4 11-1 2 3-1 5-2 9H8c0-3-4-4-5-8z" fill="#b3a48e" stroke="#695b46"/></svg></button>
      <button aria-label="Rotate"><svg viewBox="0 0 16 16"><path d="M2 13V6l3 1 4-5 4 1 2-2v7l-5-2 1-1-3 3 1 3-4 4-2-2z" fill="#4ed83a"/><circle cx="8" cy="8" r="2" fill="#d8f5d0"/></svg></button>
      <button aria-label="Look at"><svg viewBox="0 0 16 16"><path d="M1 8l7-6v4h6v4H8v4z" fill="#9fcbf3" stroke="#5794d2"/><path d="M11 12h4v3h-4z" stroke="#47c43a" stroke-width="2" fill="#47c43a"/></svg></button>
      <button aria-label="View orientation"><svg viewBox="0 0 16 16"><rect x="5" y="1" width="10" height="10" fill="#d7ebfb" stroke="#70a2d4"/><rect x="1" y="4" width="11" height="11" fill="#ffe34c" stroke="#c4a820"/><path d="M4 6l5 5M9 7v4H5" stroke="#2d8a26" stroke-width="2" fill="none"/></svg></button>
      <button aria-label="Styles"><svg viewBox="0 0 16 16"><rect x="1" y="2" width="9" height="9" fill="#33659f" stroke="#7fabd8"/><rect x="6" y="6" width="9" height="9" fill="#ffc552" stroke="#cf8d28"/></svg></button>
      <button aria-label="Select"><svg viewBox="0 0 16 16"><path d="M1 1h6v4H1zM1 6h5v4H1zM1 11h5v4H1zM8 1h6v3H8z" fill="#e58a3c" stroke="#6b3a18"/><path d="M7 4v10l3-3 2 4 2-1-2-4h3z" fill="#fff" stroke="#555" stroke-width=".6"/></svg></button>
      <button aria-label="Zoom out"><svg viewBox="0 0 16 16"><circle cx="8" cy="8" r="7" fill="#f0f0f0" stroke="#999"/><path d="M4 8h8" stroke="#333" stroke-width="2"/></svg></button>
    </div>
    <input class="zoom" type="range" min="0" max="100" value="47" aria-label="Zoom level">
    <div class="stools">
      <button aria-label="Zoom in"><svg viewBox="0 0 16 16"><circle cx="8" cy="8" r="7" fill="#f0f0f0" stroke="#999"/><path d="M4 8h8M8 4v8" stroke="#333" stroke-width="2"/></svg></button>
      <button aria-label="Record"><svg viewBox="0 0 16 16"><circle cx="8" cy="8" r="7" fill="#b9a5a5"/><circle cx="8" cy="8" r="5.500" fill="#dc1414" stroke="#8f1010"/></svg></button>
      <button aria-label="Upload"><svg viewBox="0 0 16 16"><path d="M8 0l7 7h-4v5H5V7H1z" fill="#4ee234" stroke="#249a1c"/><path d="M3 14.500h10" stroke="#c8735e" stroke-width="2"/></svg></button>
    </div>
  </footer>
</div>
</body>
</html>
```

FILE: styles.css
```css
* { box-sizing: border-box; }
body { margin: 0; font-family: Roboto, "Open Sans", sans-serif; font-size: 11px; color: #333; background: #fff; }
h1, h2, h3, p, ul { margin: 0; padding: 0; font-weight: 400; }
ul { list-style: none; }
button { border: 0; padding: 0; background: none; font: inherit; color: inherit; }
a { text-decoration: none; color: inherit; }
svg { display: block; flex: none; }
.defs { position: absolute; width: 0; height: 0; }
.app { display: flex; flex-direction: column; height: 100vh; overflow: hidden; }

/* title bar and ribbon */
.top { display: flex; height: 54px; flex: none; padding-left: 4px; }
.logo { width: 39px; height: 39px; margin-top: 4px; border: 1px solid #6485b5; border-radius: 4px; display: grid; place-items: center; flex: none; }
.bars { flex: 1; display: flex; flex-direction: column; }
.titlebar { display: grid; grid-template-columns: 1fr auto 1fr; align-items: center; height: 28px; margin-left: -43px; }
.titlebar h1 { font-size: 11px; color: #444; }
.quick { display: flex; padding-left: 69px; gap: 3px; height: 22px; margin-bottom: 2px; }
.grp { display: flex; padding-right: 3px; border-right: 1px solid #eee; }
.ic { width: 21px; display: grid; place-items: center; }
.ic svg { width: 15px; height: 15px; }
.car { width: 15px; display: grid; place-items: center; }
.car::before { content: ""; border: 3px solid transparent; border-top-color: #444; border-bottom: 0; }
.car.dim::before { border-top-color: #aaa; }
.winctl { justify-self: end; display: flex; gap: 15px; padding: 4px 8px 0 0; }
.winctl svg, .ribctl svg { width: 14px; height: 14px; }
.ribbon { display: flex; justify-content: space-between; align-items: center; height: 26px; padding: 0 1px 2px 29px; }
.ribbon nav { display: flex; gap: 1px; }
.ribbon nav a { padding: 0 14px; color: #444; }
.ribctl { display: flex; align-items: center; padding-bottom: 3px; }
.ribctl button { width: 16px; display: grid; place-items: center; }
.ribctl .wide { width: 21px; }

/* work area */
.work { flex: 1; display: flex; min-height: 0; background: linear-gradient(#f7fbfb, #fafcfc 70%, #fff); }
.rail { flex: none; background: #f4f4f4; display: flex; flex-direction: column; padding-top: 3px; }
.rail.left { width: 30px; }
.rail.right { width: 29px; gap: 10px; overflow: hidden; }
.tab { display: flex; align-items: center; flex: none; height: 24px; padding-left: 4px; border-right: 4px solid #dcdcdc; }
.right .tab svg { width: 20px; height: 20px; }
.tall { flex-direction: column; border-right-color: #2b579a; color: #2b579a; font-family: "Open Sans", sans-serif; font-size: 12px; }
.tall span { writing-mode: vertical-rl; line-height: 16px; }
.eng { height: 148px; padding: 2px 0 0; border-right: 0; border-left: 4px solid #2b579a; align-items: flex-start; }
.req { height: 148px; padding: 3px 0 0 4px; }
.lib { height: 137px; margin: 7px 0 1px; padding: 3px 0 0 4px; }
.right .tall { align-items: flex-start; }
.right .tall span { margin-left: 2px; }
.right .last { height: 16px; }
.right .last svg { height: 12px; }
.yt { flex-direction: column; font: bold 9px/10px "Liberation Sans", Arial, sans-serif; padding-top: 2px; }
.yt i { font-style: normal; background: #c4302b; color: #fff; width: 20px; font-size: 8px; text-align: center; }

/* tree panel */
.finder { width: 220px; flex: none; display: flex; flex-direction: column; }
.ftitle { display: flex; align-items: center; height: 21px; flex: none; padding: 0 3px 0 11px; gap: 3px; background: #2b579a; color: #fff; }
.ftitle h2 { flex: 1; font-size: 12px; white-space: nowrap; }
.grip { height: 9px; flex: none; border: 1px solid #999; background: linear-gradient(#fff, #d5d5d5); margin-bottom: 2px; }
.treebox { flex: 1; display: flex; min-height: 0; padding: 0 3px; }
.vscroll { width: 16px; flex: none; display: flex; flex-direction: column; align-items: center; padding: 5px 0; gap: 4px; background: #f0f0f0; }
.track { flex: 1; align-self: stretch; }
.thumb { height: 48%; background: #cdcdcd; }
.tree { flex: 1; overflow: hidden; color: #222; }
.tree li { display: flex; align-items: center; height: 16px; padding-left: 23px; white-space: nowrap; line-height: 15px; }
.tree li.sys { padding-left: 8px; }
.tree li.root { padding-left: 2px; gap: 3px; }
.tree label { display: flex; align-items: center; gap: 4px; flex: 1; }
.tree input { appearance: none; width: 12px; height: 12px; margin: 0; flex: none; border: 1px solid #5c7596; background: #fff; display: grid; place-items: center; }
.tree input:checked::before { content: ""; width: 8px; height: 8px; background: #1c4478; clip-path: polygon(0 45%, 15% 30%, 38% 58%, 85% 5%, 100% 20%, 38% 95%); }
.tree .off input { border-color: #a4b0c0; }
.off .hl { color: #868686; }
.hl { display: flex; align-items: center; height: 16px; flex: 1; background: linear-gradient(#f9fbfc, #e8eef4); border-bottom: 1px solid #dbe3ec; }
.sys .hl { flex: none; padding-right: 2px; border-right: 1px solid #dbe3ec; }
.hl.fit { margin-left: 2px; }
.p { width: 16px; height: 14px; }
.t { width: 14px; height: 12px; margin: 0 2px; }
.g { width: 14px; height: 14px; }
.root .t { margin: 0; }
.plus { width: 9px; height: 9px; margin-right: 6px; border: 1px solid #a9b1ba; background: linear-gradient(#333, #333) center / 5px 1px no-repeat, linear-gradient(#333, #333) center / 1px 5px no-repeat, #e3e8ec; }
.hscroll { display: flex; align-items: center; height: 16px; flex: none; margin: 1px 3px 0 19px; padding: 0 4px; gap: 5px; background: #f0f0f0; }
.htrack { flex: 1; align-self: stretch; }
.hthumb { width: 59%; height: 100%; background: #cdcdcd; }
.mark { width: 9px; height: 4px; margin-left: 2px; background: #fba94c; flex: none; }
.msg { align-self: flex-start; margin: 0 0 33px 2px; padding: 0 2px 0 15px; line-height: 15px; height: 16px; border: 1px solid #d3dde8; background: linear-gradient(#fdfefe, #e9eff5); border-left-color: #eef2f6; color: #222; white-space: nowrap; }

/* model view */
.view { flex: 1; position: relative; display: flex; flex-direction: column; min-width: 0; }
.strip { height: 21px; flex: none; display: flex; justify-content: flex-end; align-items: center; padding: 0 1px 2px; gap: 1px; background: #fff; border-bottom: 1px solid #9fb2d6; }
.strip button { width: 13px; display: grid; place-items: center; }
.strip svg { width: 12px; height: 12px; }
.canvas { flex: 1; min-height: 0; overflow: hidden; }
.scene { width: 100%; height: 100%; }
.cubetext { font: 8px "Liberation Sans", Arial, sans-serif; fill: #555; }
.sketch { position: absolute; right: 7px; top: 26px; }

/* read-only assistant */
.assist { position: absolute; top: 17px; right: 22px; width: 350px; padding: 15px 32px 99px 9px; background: #fff; border: solid #b5b5b5; border-width: 0 2px 2px 0; color: #111; font: 14px/16px "Liberation Sans", Arial, sans-serif; }
.ahead { display: flex; justify-content: space-between; align-items: center; height: 37px; margin-right: -1px; padding: 0 4px 15px 3px; border-bottom: 2px solid #6db6f8; }
.ahead h2 { font-size: 16px; font-weight: 700; }
.ahead svg { margin-right: -6px; }
.arow { display: flex; justify-content: space-between; padding: 10px 0 0 3px; font-size: 13px; }
.arow h3 { font-size: 12px; line-height: 17px; font-weight: 700; color: #7d7d7d; }
.arow a { color: #1f6fe5; text-decoration: underline; }
.rel { display: flex; align-items: center; gap: 10px; padding: 8px 0 0 7px; }
.rel strong { font-size: 16px; font-weight: 400; }
.note { display: flex; gap: 14px; padding: 8px 0 14px 30px; margin-right: -1px; border-bottom: 1px solid #c9c9c9; font-size: 13px; line-height: 16px; white-space: nowrap; }
.note svg { margin-top: 13px; }
.time { display: flex; gap: 12px; margin-top: 8px; }
.checkout { display: flex; align-items: flex-end; gap: 6px; width: 100%; padding: 16px 0 16px 30px; border-bottom: 1px solid #c9c9c9; }
.checkout span { margin-bottom: -2px; }
.acts { display: flex; gap: 26px; padding: 9px 0 0 100px; }
.acts button { display: flex; flex-direction: column; align-items: center; }
.cursor { position: absolute; left: 130px; top: 364px; }

/* status bar */
.status { display: flex; align-items: center; height: 20px; flex: none; padding-left: 3px; background: #2b579a; color: #fff; font-family: "Noto Sans", "Open Sans", sans-serif; }
.hint { flex: 0 1 588px; overflow: hidden; white-space: nowrap; }
.count { flex: none; width: 103px; margin: 0 12px 0 8px; overflow: hidden; white-space: nowrap; }
.find { width: 140px; height: 18px; flex: none; align-self: flex-end; border: 0; padding: 0 3px; font: inherit; }
.find::placeholder { color: #aaa; opacity: 1; }
.stools { display: flex; flex: none; }
.stools button { width: 22px; display: grid; place-items: center; }
.stools svg { width: 16px; height: 16px; }
.zoom { appearance: none; flex: 1; min-width: 60px; height: 16px; margin: 0; background: linear-gradient(#9db8dc, #9db8dc) center / 100% 1px no-repeat; }
.zoom::-webkit-slider-thumb { appearance: none; width: 11px; height: 14px; background: #8fa9cd; border: 2px solid #dfe8f4; clip-path: polygon(0 0, 100% 0, 100% 65%, 50% 100%, 0 65%); }
```
